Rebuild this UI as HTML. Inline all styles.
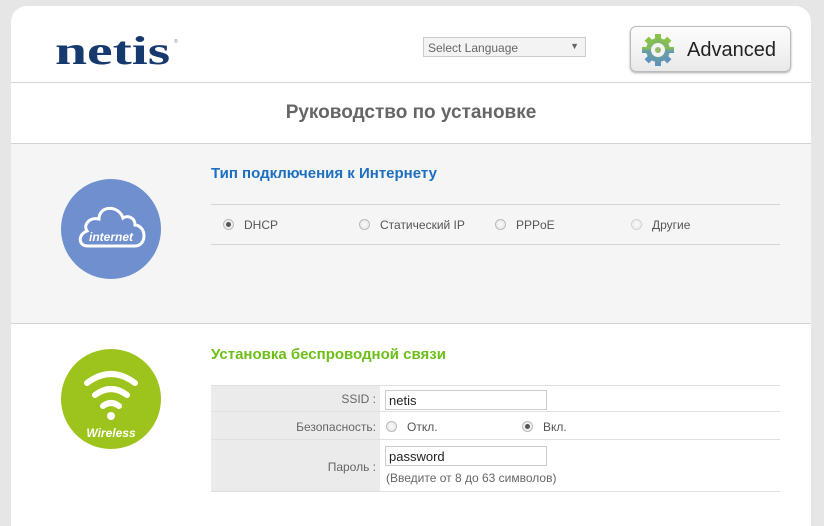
<!DOCTYPE html>
<html><head><meta charset="utf-8"><style>
*{margin:0;padding:0;box-sizing:border-box}
body{width:824px;height:503px;background:#e6e6e6;font-family:"Liberation Sans",Arial,sans-serif;position:relative;overflow:hidden}
.panel{position:absolute;left:11px;top:6px;width:800px;height:520px;background:#fff;border-radius:16px 16px 0 0;overflow:hidden}
.abs{position:absolute}
.hl{position:absolute;height:1px;background:#d4d4d4}
.radio{position:absolute;width:11px;height:11px;border-radius:50%;border:1px solid #bbb;background:radial-gradient(circle,#fafafa,#e4e4e4)}
.radio.on::after{content:"";position:absolute;left:2px;top:2px;width:5px;height:5px;border-radius:50%;background:#555}
.t12{font-size:12px;color:#555}
</style></head><body>
<div class="panel">
<div class="abs" style="left:44px;top:22px;font-family:'Liberation Serif',serif;font-weight:bold;font-size:40px;line-height:46px;color:#163a6e;transform:scaleX(1.44);transform-origin:left">netis</div>
<div class="abs" style="left:163px;top:33px;font-size:5px;color:#888">®</div>
<div class="abs" style="left:412px;top:31px;width:163px;height:20px;border:1px solid #ccc;background:#f3f3f3;font-size:12px;color:#666;padding:3px 4px">Select Language<span style="position:absolute;right:6px;top:3px;font-size:9px">▼</span></div>
<div class="abs" style="left:619px;top:20px;width:161px;height:46px;border:1px solid #bbb;border-radius:6px;background:linear-gradient(#fdfdfd,#e9e9e9);box-shadow:0 1px 2px #aaa">
<svg class="abs" style="left:10px;top:6px" width="34" height="34" viewBox="0 0 34 34"><defs><linearGradient id="g" x1="0" y1="0" x2="0" y2="1"><stop offset="0" stop-color="#8cc63f"/><stop offset="1" stop-color="#5b8fc7"/></linearGradient></defs><g fill="url(#g)"><circle cx="17" cy="17" r="12"/><rect x="14" y="1" width="6" height="32"/><rect x="1" y="14" width="32" height="6"/><rect x="14" y="1" width="6" height="32" transform="rotate(45 17 17)"/><rect x="14" y="1" width="6" height="32" transform="rotate(-45 17 17)"/></g><circle cx="17" cy="17" r="7" fill="#f3f3f3"/><circle cx="17" cy="17" r="3" fill="#9cb86a"/></svg>
<div class="abs" style="left:56px;top:12px;font-size:20px;color:#222">Advanced</div></div>
<div class="hl" style="left:0;top:76px;width:800px"></div>
<div class="abs" style="left:0;top:96px;width:800px;text-align:center;font-size:19px;font-weight:bold;color:#666">Руководство по установке</div>
<div class="abs" style="left:0;top:137px;width:800px;height:181px;background:#f5f5f5;border-top:1px solid #d4d4d4;border-bottom:1px solid #d4d4d4"></div>
<svg class="abs" style="left:50px;top:173px" width="100" height="100" viewBox="0 0 100 100"><circle cx="50" cy="50" r="50" fill="#6f8fce"/><path d="M26 67 H74 C86 67 86 47 74 46 C74 38 66 36 62 39 C58 26 38 26 38 40 C28 38 22 46 26 52 C16 56 18 67 26 67 Z" fill="none" stroke="#fff" stroke-width="3"/><text x="50" y="62" text-anchor="middle" font-family="Liberation Sans" font-style="italic" font-weight="bold" font-size="12" fill="#fff">internet</text></svg>
<div class="abs" style="left:200px;top:159px;font-size:15px;font-weight:bold;color:#1d6fbf">Тип подключения к Интернету</div>
<div class="hl" style="left:200px;top:198px;width:569px"></div>
<div class="hl" style="left:200px;top:238px;width:569px"></div>
<div class="radio on" style="left:212px;top:213px"></div><div class="abs t12" style="left:233px;top:212px">DHCP</div>
<div class="radio" style="left:348px;top:213px"></div><div class="abs t12" style="left:369px;top:212px">Статический IP</div>
<div class="radio" style="left:484px;top:213px"></div><div class="abs t12" style="left:505px;top:212px">PPPoE</div>
<div class="radio" style="left:620px;top:213px;opacity:.6"></div><div class="abs t12" style="left:641px;top:212px">Другие</div>
<svg class="abs" style="left:50px;top:343px" width="100" height="100" viewBox="0 0 100 100"><circle cx="50" cy="50" r="50" fill="#9dc41c"/><g fill="none" stroke="#fff" stroke-width="6" stroke-linecap="round"><path d="M26 34 Q50 16 74 34"/><path d="M34 46 Q50 34 66 46"/><path d="M42 57 Q50 51 58 57"/></g><circle cx="50" cy="67" r="4" fill="#fff"/><text x="50" y="88" text-anchor="middle" font-family="Liberation Sans" font-style="italic" font-weight="bold" font-size="12" fill="#fff">Wireless</text></svg>
<div class="abs" style="left:200px;top:340px;font-size:15px;font-weight:bold;color:#6cbf18">Установка беспроводной связи</div>
<div class="abs" style="left:200px;top:379px;width:169px;height:106px;background:#ebebeb"></div>
<div class="hl" style="left:200px;top:379px;width:569px;background:#e0e0e0"></div>
<div class="hl" style="left:200px;top:405px;width:569px;background:#e0e0e0"></div>
<div class="hl" style="left:200px;top:433px;width:569px;background:#e0e0e0"></div>
<div class="hl" style="left:200px;top:485px;width:569px;background:#e0e0e0"></div>
<div class="abs t12" style="left:200px;top:386px;width:165px;text-align:right;color:#666">SSID :</div>
<div class="abs" style="left:374px;top:384px;width:162px;height:20px;border:1px solid #ccc;font-size:13px;padding:2px 3px;color:#222">netis</div>
<div class="abs t12" style="left:200px;top:414px;width:165px;text-align:right;color:#666">Безопасность:</div>
<div class="radio" style="left:375px;top:415px"></div><div class="abs t12" style="left:396px;top:414px">Откл.</div>
<div class="radio on" style="left:511px;top:415px"></div><div class="abs t12" style="left:532px;top:414px">Вкл.</div>
<div class="abs t12" style="left:200px;top:454px;width:165px;text-align:right;color:#666">Пароль :</div>
<div class="abs" style="left:374px;top:440px;width:162px;height:20px;border:1px solid #ccc;font-size:13px;padding:2px 3px;color:#222">password</div>
<div class="abs t12" style="left:375px;top:465px;color:#666">(Введите от 8 до 63 символов)</div>
</div>
</body></html>
